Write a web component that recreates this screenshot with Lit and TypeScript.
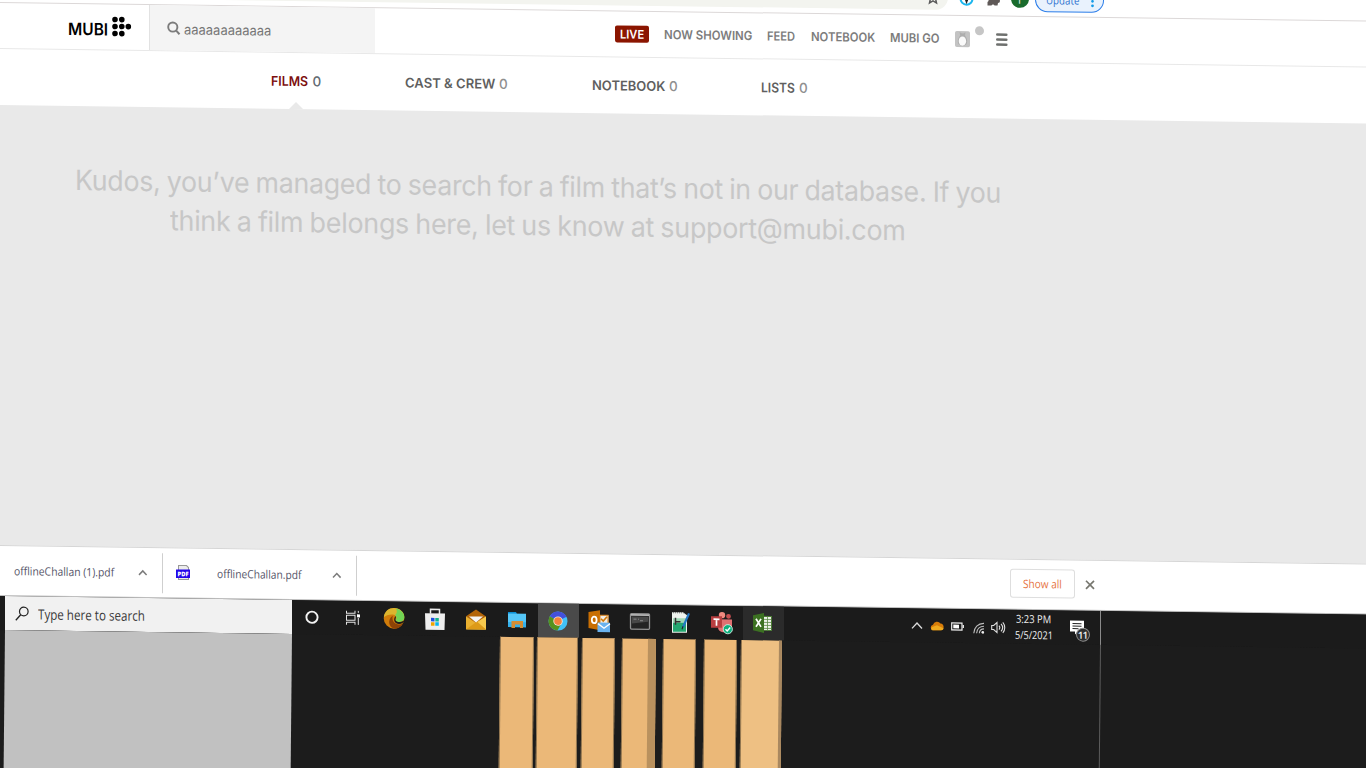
import { LitElement, html, css, svg } from "lit";
import { customElement, property } from "lit/decorators.js";

/** One line of text, condensed or stretched to a given advance width. */
@customElement("fit-text")
class FitText extends LitElement {
  @property({ type: Number }) w = 0;
  static styles = css`
    :host { display: block; white-space: nowrap; flex: none; }
    .t { display: inline-block; transform-origin: 0 50%; }
  `;
  firstUpdated() {
    const t = this.renderRoot.querySelector(".t") as HTMLElement;
    const natural = t.offsetWidth;
    this.style.width = `${this.w}px`;
    if (natural) t.style.transform = `scaleX(${this.w / natural})`;
  }
  render() {
    return html`<span class="t"><slot></slot></span>`;
  }
}

const icon = (cls: string, w: number, h: number, body: unknown) =>
  html`<svg class=${cls} width=${w} height=${h} viewBox="0 0 ${w} ${h}" fill="none">${body}</svg>`;

const star = svg`<path d="M7 1.5l1.6 3.7 4 .3-3 2.7.9 4.1L7 10.2l-3.5 2.1.9-4.1-3-2.7 4-.3z" stroke="#5a5a5a" stroke-width="1.5"/>`;
const ring = svg`<circle cx="7.5" cy="7.5" r="6" fill="#fff" stroke="#1cb6ee" stroke-width="2"/><path d="M5 4h5l-1 5-1.500 4L6 9z" fill="#222"/>`;
const puzzle = svg`<path d="M2 4h3a2 2 0 1 1 4 0h3v3.500a2 2 0 1 1 0 4L11.500 14H8.500a1.600 1.600 0 0 0-3 0H1.500v-3.500a1.700 1.700 0 0 0 0-3.200z" fill="#5f5957"/>`;
const mubiDots = svg`<g fill="#000">${[
  [3, 3], [9.800, 3], [3, 9.900], [9.800, 9.900], [16.300, 9.900], [3, 17], [9.800, 17],
].map(([x, y]) => svg`<circle cx=${x} cy=${y} r="2.800"/>`)}</g>`;
const lens = svg`<circle cx="5.800" cy="5.700" r="4.600" stroke="#7c7c7c" stroke-width="1.900"/><path d="M9.200 9.300l3.300 3.500" stroke="#7c7c7c" stroke-width="2"/>`;
const avatar = svg`<rect width="15" height="16" rx="1.800" fill="#c3c3c3"/><path d="M4.500 1l2 1.300h2L10.500 1 10 4.500c2 2.500 2.800 5 1.800 8-1 2.500-7.600 2.500-8.600 0-1-3 0-5.500 2-8z" fill="#aeaeae"/><ellipse cx="7.400" cy="10" rx="3.700" ry="4.600" fill="#fafafa"/>`;
const burger = svg`<path d="M1.300 2h9M1.300 7h9M1.300 12h9" stroke="#6e706e" stroke-width="2.600" stroke-linecap="round"/>`;
const caret = svg`<path d="M1 6l3.800-4L8.600 6" stroke="#7b7b7b" stroke-width="1.500"/>`;
const cross = svg`<path d="M1 1l8 8M9 1l-8 8" stroke="#77776f" stroke-width="1.700"/>`;
const winLens = svg`<circle cx="8.800" cy="5.200" r="4.300" stroke="#222" stroke-width="1.200"/><path d="M5.700 8.500L.8 14" stroke="#222" stroke-width="1.300"/>`;

const cortana = svg`<circle cx="12" cy="12" r="5.600" stroke="#f2f2f2" stroke-width="1.900"/>`;
const taskview = svg`<path d="M5.500 5v2.500h8.500V5M5.500 19v-2.500h8.500V19M5.500 9.500h8.500v5H5.500zM17.300 5v2M17.300 12v7" stroke="#e4e4e4" stroke-width="1"/><rect x="16" y="8.500" width="3" height="3" fill="#fff"/>`;
const edge = svg`<circle cx="12" cy="12" r="10.300" fill="#d07c0a"/><path d="M1.800 11C2.500 5 7 1.700 12 1.700c6 0 10.300 4 10.300 8.500 0 3.600-2.500 5.300-5.300 5.300-2 0-3.300-.8-3.300-1.700 0-.7.800-1 .8-2.300 0-1.800-1.500-3.300-4.200-3.300-3.500 0-6.800 1.500-8.500 2.800z" fill="#dcb52e"/><path d="M14 2c5 1 8.300 4.500 8.300 8.500 0 3.300-2.500 5-5.300 5-2 0-3.300-.8-3.300-1.700 0-.7.800-1 .8-2.300 0-1-.5-2-1.500-2.600C15 7 15.500 4.500 14 2z" fill="#72d454"/><path d="M10.800 9.500c-1.500 5 2 8.500 6 8.500 2 0 3-.6 4-.8-2 3.300-5 5.100-8.800 5.100-5-1-7.200-9-1.200-12.800z" fill="#8c4307"/><path d="M13.500 9.500c1 1.500-.5 3 0 4.300.5 1.200 2 1.700 4 1.700 2.500 0 4-1 5-2-.5 2.500-3 4-5.500 4-4 0-6.500-4-3.500-8z" fill="#1b1b1b"/>`;
const store = svg`<path d="M7.500 7V2.500h9V7" stroke="#ececec" stroke-width="1.500"/><path d="M2 6.500h20L21.500 23h-19z" fill="#eee"/><path d="M8 11h3.500v3.500H8z" fill="#1f4fe0"/><path d="M12.300 11h3.500v3.500h-3.500z" fill="#13b58c"/><path d="M8 15.300h3.500v3.500H8z" fill="#efa400"/><path d="M12.300 15.300h3.500v3.500h-3.500z" fill="#07b4f3"/>`;
const mail = svg`<path d="M2 9l10-7 10 7-10 8z" fill="#b26408"/><path d="M2 9l10 6.500L22 9v13H2z" fill="#eab030"/><path d="M2 22l12-8 8-5v13z" fill="#f7c94d"/><path d="M2 22h20L13 14z" fill="#dd9a18"/><path d="M5 9h14l-7 6z" fill="#f4f4f4"/>`;
const folder = svg`<path d="M3 4h8l1 2h-9z" fill="#0c8fd4"/><path d="M3 5.500h18V19H3z" fill="#55c6f7"/><path d="M3 14h18v5H3z" fill="#34b1ec"/><path d="M6.500 13h11.500v7h-3v-3.500h-5V20h-3.500z" fill="#d48e35"/>`;
const chrome = svg`<circle cx="12" cy="12.500" r="9.500" fill="#41c1f8"/><path d="M12 12.500L3.700 7.800A9.500 9.500 0 0 1 20.500 8z" fill="#4450db"/><path d="M12 12.500L3.700 7.800A9.500 9.500 0 0 0 11.500 22l4-7.500z" fill="#55921d"/><circle cx="12" cy="12.500" r="4.700" fill="#f5e6dc"/><circle cx="12" cy="12.500" r="3.800" fill="#f4823d"/>`;
const outlook = svg`<path d="M13 6h8.500v10H13z" fill="#f2ede4"/><path d="M1.500 3l11.500-2v20L1.500 19z" fill="#c96f03"/><path d="M13 6h8v10h-8z" stroke="#d98118" stroke-width="1"/><path d="M14 9.500l2.200 2.300L20 7.500" stroke="#d27908" stroke-width="1.600"/><ellipse cx="7.200" cy="10.800" rx="2.400" ry="3.300" stroke="#fff" stroke-width="1.800"/><path d="M10.500 13.500h12.500V23H10.500z" fill="#69b2ef"/><path d="M11 14.500l6 4.500 6-4.500" stroke="#fff" stroke-width="1.400"/>`;
const cmd = svg`<rect x="2.500" y="4" width="19" height="15.500" rx="1" fill="#242424" stroke="#929292" stroke-width="1.300"/><path d="M3 5.300h18" stroke="#b8b8b8" stroke-width="1.800"/><path d="M4 7h16v5L4 14z" fill="#484848"/><path d="M5.500 9.500h3M10 9.500h1M12 11h3" stroke="#999" stroke-width=".8"/>`;
const notepad = svg`<path d="M3 2h11l4 3v17.500H3z" fill="#eef3ee"/><path d="M4 12h13v9.500H4z" fill="#23a770"/><path d="M4 8h13v4.500H4z" fill="#9fd8b6"/><path d="M4 2.500h11" stroke="#666" stroke-dasharray="1 1"/><path d="M6.500 7.500v7M6.500 11.500h5" stroke="#333" stroke-width="1.500"/><path d="M20 3l-6 14" stroke="#2277c4" stroke-width="2.200"/><path d="M14 16l-1 3" stroke="#222" stroke-width="1"/>`;
const teams = svg`<circle cx="12" cy="4.300" r="3.200" fill="#ef8a80"/><circle cx="18.500" cy="5.500" r="2.400" fill="#c74e50"/><path d="M8 8.500h14v7.500a5.500 5.500 0 0 1-5 5.500h-4a5 5 0 0 1-5-5z" fill="#e07071"/><path d="M1 5.500h11v11.500H1z" fill="#b83e40"/><path d="M3.500 8.500h6M6.500 8.500V15" stroke="#fff" stroke-width="1.700"/><circle cx="17.800" cy="18.300" r="4.600" fill="#0eb07d" stroke="#e9f7f1" stroke-width=".8"/><path d="M15.500 18.300l1.700 1.800 3-3.500" stroke="#fff" stroke-width="1.400"/>`;
const excel = svg`<path d="M12 5h8.500v14H12z" fill="#eef3ea" stroke="#4b7b35" stroke-width="1"/><path d="M13 8h7M13 11h7M13 14h7M13 17h7M16.500 5v14" stroke="#5b8a45" stroke-width=".8"/><path d="M2 4l11-2.500v20L2 19z" fill="#3c7122"/><path d="M5 7.500l5 8M10 7.500l-5 8" stroke="#fff" stroke-width="1.700"/>`;

const apps = [cortana, taskview, edge, store, mail, folder, chrome, outlook, cmd, notepad, teams, excel];
const cellClass = (i: number) => (i === 6 ? "cell active" : i === 11 ? "cell open" : "cell");

@customElement("app-root")
class AppRoot extends LitElement {
  static styles = css`
    :host { display: block; width: 1366px; height: 768px; overflow: hidden; background: #1c1c1c; }
    .sheet { display: flex; flex-direction: column; width: 1366px; margin-top: -29px; transform: skewY(0.779deg); transform-origin: 0 0; background: #1c1c1c; font-family: Inter, sans-serif; }
    svg { flex: none; display: block; overflow: visible; }
    .row { display: flex; align-items: center; box-sizing: border-box; flex: none; }
    .page { display: flex; flex-direction: column; background: #fff; }

    .toolbar { height: 32px; padding-bottom: 2.500px; border-bottom: 1px solid #dcd8d8; }
    .omnibox { width: 948px; height: 24px; background: #f3f4ef; border-radius: 0 12px 12px 0; display: flex; align-items: center; justify-content: flex-end; padding-right: 8px; box-sizing: border-box; }
    .ring { margin-left: 11px; }
    .puzzle { margin-left: 11.500px; }
    .profile { margin-left: 10px; width: 18px; height: 18px; border-radius: 50%; background: #196b2c; color: #e5f2e5; font: 11px/20px "Open Sans", sans-serif; text-align: center; }
    .update { margin-left: 6px; width: 69px; height: 25px; border: 1px solid #2b7de9; border-radius: 13px; background: #e9f2fd; color: #2f74d0; display: flex; align-items: center; box-sizing: border-box; padding-left: 10px; font: 11.500px "Open Sans", sans-serif; }
    .kebab { margin-left: 12px; }

    .header { height: 46px; border-bottom: 1px solid #e8e8e8; }
    .brand { margin-left: 68px; font-size: 17px; font-weight: 600; color: #000; padding-top: 5px; }
    .dots { margin-left: 4px; margin-bottom: 2px; }
    .search { margin-left: 17px; width: 226px; height: 45px; background: #f4f4f4; border-left: 1px solid #e2e2e2; box-sizing: border-box; padding-left: 17px; }
    .query { margin-left: 4px; padding-top: 2px; font-size: 14px; color: #777; }
    .nav { margin-left: 240px; font-size: 12.500px; font-weight: 600; color: #7c7c7c; gap: 15px; }
    .live { width: 33.500px; height: 17px; border-radius: 2px; background: #8b1500; color: #fff; justify-content: center; font-size: 12px; }
    .bell { width: 9px; height: 9px; border-radius: 50%; background: #c6c6c6; margin: 0 -2.500px 16px -10.500px; }

    .tabs { height: 56px; font-size: 13.500px; font-weight: 600; color: #5f5f5f; padding-left: 271px; }
    .tab { position: relative; gap: 4px; height: 56px; }
    .count { font-weight: 500; color: #8f8f8f; }
    .films { color: #7d0f0f; width: 134px; }
    .films .count { color: #626b72; }
    .films::after { content: ""; position: absolute; left: 18px; bottom: 0; border: 7px solid transparent; border-top: 0; border-bottom-color: #e9e9e9; }
    .crew { width: 187px; }
    .note { width: 169px; }

    .results { height: 440px; background: #e9e9e9; box-sizing: border-box; padding: 55px 0 0 75px; font-size: 28px; line-height: 39.400px; color: #c7c7c7; word-spacing: -1px; letter-spacing: -0.3px; }
    .second { margin-left: 95px; }

    .shelf { height: 51px; border-top: 1px solid #d6d6d6; border-bottom: 1px solid #bdbdbd; font: 11.500px "Open Sans", sans-serif; color: #555468; }
    .file { height: 40px; border-right: 1px solid #cfcfcf; }
    .first { width: 163px; padding-left: 14px; }
    .next { width: 194px; padding-left: 13px; }
    .c1 { margin-left: 24px; }
    .c2 { margin-left: 30.500px; }
    .fname2 { margin-left: 27px; }
    .show { margin-left: 652.500px; width: 65px; height: 29px; border: 1px solid #dedede; border-radius: 3px; color: #e6733f; justify-content: center; margin-bottom: 2px; }
    .close { margin-left: 10px; margin-bottom: 2px; }

    .taskbar { height: 34px; background: #1b1b1b; color: #f0f0f0; font-family: "Open Sans", sans-serif; }
    .find { margin-left: 5px; width: 286.500px; height: 34px; background: #f1f1f1; padding: 1px 0 0 10px; color: #3a3a3a; font-size: 14px; }
    .find-label { margin-left: 9px; }
    .cell { width: 41px; height: 34px; flex: none; display: flex; align-items: center; justify-content: center; }
    .active { background: #4a4a4a; }
    .open { background: #2b2b2b; }
    .up { margin-left: 127px; }
    .cloud { margin-left: 7px; }
    .battery { margin-left: 7px; margin-top: 1px; }
    .wifi { margin-left: 9px; margin-top: 3px; }
    .sound { margin-left: 6px; margin-top: 1px; }
    .clock { margin-left: 10px; display: flex; flex-direction: column; align-items: center; font-size: 11px; line-height: 16.500px; }
    .notes { margin-left: 17px; position: relative; }
    .badge { position: absolute; left: 6px; top: 7px; width: 12px; height: 12px; border-radius: 50%; border: 1px solid #8b8b8b; background: #2d2d2d; font-size: 10px; font-weight: 600; line-height: 12px; text-align: center; letter-spacing: -1px; }

    .floor { height: 170px; margin-top: -0.5px; background: #1c1c1c; transform: skewX(-0.57deg); transform-origin: 0 0; display: flex; }
    .slab { margin-left: 5px; width: 286.500px; background: #c1c1c1; }
    .bar { width: 33.500px; background: #ebb878; border-left: 1px solid #8f744f; border-right: 1px solid #8f744f; box-sizing: border-box; }
    .b0 { margin-left: 208.500px; }
    .b1 { margin-left: 3.500px; width: 41px; }
    .b2 { margin-left: 3.500px; }
    .b3 { margin-left: 7px; border-right: 8px solid #b9915e; }
    .b4 { margin-left: 7px; }
    .b5 { margin-left: 7.500px; }
    .b6 { margin-left: 3.500px; width: 41px; background: #eec083; border-right: 3px solid #a98860; }
    .edge { margin-left: 318px; width: 1px; background: #5c5c5c; }
    .rule { width: 1px; height: 34px; background: #8a8a8a; margin-left: 16.500px; }
  `;

  render() {
    return html`
      <div class="sheet">
        <div class="page">
          <div class="row toolbar">
            <div class="omnibox">${icon("star", 14, 14, star)}</div>
            ${icon("ring", 15, 15, ring)} ${icon("puzzle", 15, 15, puzzle)}
            <div class="profile">T</div>
            <div class="update">
              <fit-text w="33">Update</fit-text>
              ${icon("kebab", 3, 13, svg`<g fill="#139be8"><circle cx="1.500" cy="3" r="1.400"/><circle cx="1.500" cy="7.500" r="1.400"/><circle cx="1.500" cy="12" r="1.400"/></g>`)}
            </div>
          </div>

          <div class="row header">
            <fit-text class="brand" w="40">MUBI</fit-text>
            ${icon("dots", 20, 20, mubiDots)}
            <div class="row search">${icon("lens", 13, 14, lens)}<fit-text class="query" w="87">aaaaaaaaaaaa</fit-text></div>
            <div class="row nav">
              <div class="row live"><fit-text w="24">LIVE</fit-text></div>
              <fit-text w="88.500">NOW SHOWING</fit-text>
              <fit-text w="28.500">FEED</fit-text>
              <fit-text w="64.500">NOTEBOOK</fit-text>
              <fit-text w="50">MUBI GO</fit-text>
              ${icon("avatar", 15, 16, avatar)}
              <div class="bell"></div>
              ${icon("burger", 12, 14, burger)}
            </div>
          </div>

          <div class="row tabs">
            <div class="row tab films"><fit-text w="37.500">FILMS</fit-text><fit-text class="count" w="9">0</fit-text></div>
            <div class="row tab crew"><fit-text w="90">CAST &amp; CREW</fit-text><fit-text class="count" w="9">0</fit-text></div>
            <div class="row tab note"><fit-text w="73">NOTEBOOK</fit-text><fit-text class="count" w="9">0</fit-text></div>
            <div class="row tab"><fit-text w="34">LISTS</fit-text><fit-text class="count" w="9">0</fit-text></div>
          </div>

          <div class="results">
            <fit-text w="926">Kudos, you’ve managed to search for a film that’s not in our database. If you</fit-text>
            <fit-text class="second" w="736">think a film belongs here, let us know at support@mubi.com</fit-text>
          </div>

          <div class="row shelf">
            <div class="row file first"><fit-text w="100">offlineChallan (1).pdf</fit-text>${icon("c1", 10, 8, caret)}</div>
            <div class="row file next">
              ${icon("pdf", 14, 15, svg`<path d="M2.500 0h8l2 2v12h-10z" fill="#ececec" stroke="#999"/><path d="M0 4h14v8.500H0z" fill="#2406ea"/><text x="7" y="10.800" text-anchor="middle" font-family="Open Sans, sans-serif" font-size="6.500" font-weight="800" fill="#fff" textLength="11" lengthAdjust="spacingAndGlyphs">PDF</text>`)}
              <fit-text class="fname2" w="84.500">offlineChallan.pdf</fit-text>${icon("c2", 10, 8, caret)}
            </div>
            <div class="row show"><fit-text w="38.500">Show all</fit-text></div>
            ${icon("close", 10, 10, cross)}
          </div>
        </div>

        <div class="row taskbar">
          <div class="row find">${icon("win", 14, 15, winLens)}<fit-text class="find-label" w="107">Type here to search</fit-text></div>
          ${apps.map((a, i) => html`<div class=${cellClass(i)}>${icon("app", 24, 24, a)}</div>`)}
          ${icon("up", 12, 8, svg`<path d="M1 7l5-5.500L11 7" stroke="#ddd" stroke-width="1.300"/>`)}
          ${icon("cloud", 14, 10, svg`<path d="M3 9.500a2.800 2.800 0 0 1 0-5.500 4.200 4.200 0 0 1 7.500-1.200A3.400 3.400 0 0 1 11 9.500z" fill="#d87d09"/><path d="M2 9.500c-1.500-1-1-3 1-3.500l4-1.500 6.500 3c0 1.200-1 2-2 2z" fill="#efab1f"/>`)}
          ${icon("battery", 13, 9, svg`<path d="M.7 1h10.300v7H.7z" stroke="#eee" stroke-width="1.200"/><path d="M2.300 2.600H8v3.800H2.300z" fill="#fff"/><path d="M12.300 3v3" stroke="#eee" stroke-width="1.300"/>`)}
          ${icon("wifi", 12, 12, svg`<path d="M.8 11C1 5 5 1 11 1M3.600 11C3.800 6.800 6.800 3.900 11 3.800M6.300 11c.2-2.600 2-4.400 4.700-4.500" stroke="#bdbdbd" stroke-width="1.100"/><circle cx="9.800" cy="10" r="1.300" fill="#eee"/>`)}
          ${icon("sound", 14, 12, svg`<path d="M.7 4h2L6 1v10L2.700 8h-2zM8 4c1 1.200 1 2.800 0 4M10 2.300c2 2.200 2 5.200 0 7.400M11.800.8c2.600 3 2.600 7.400 0 10.400" stroke="#ddd" stroke-width="1.100"/>`)}
          <div class="clock"><fit-text w="35">3:23 PM</fit-text><fit-text w="38">5/5/2021</fit-text></div>
          <div class="notes">
            ${icon("bubble", 14, 14, svg`<path d="M0 0h14v11H8l-3 3v-3H0z" fill="#fff"/><path d="M2.500 3h9M2.500 5.500h9M2.500 8h6" stroke="#222" stroke-width="1"/>`)}
            <div class="badge">11</div>
          </div>
          <div class="rule"></div>
        </div>

        <div class="floor">
          <div class="slab"></div>
          ${[0, 1, 2, 3, 4, 5, 6].map((i) => html`<div class="bar b${i}"></div>`)}
          <div class="edge"></div>
        </div>
      </div>
    `;
  }
}
